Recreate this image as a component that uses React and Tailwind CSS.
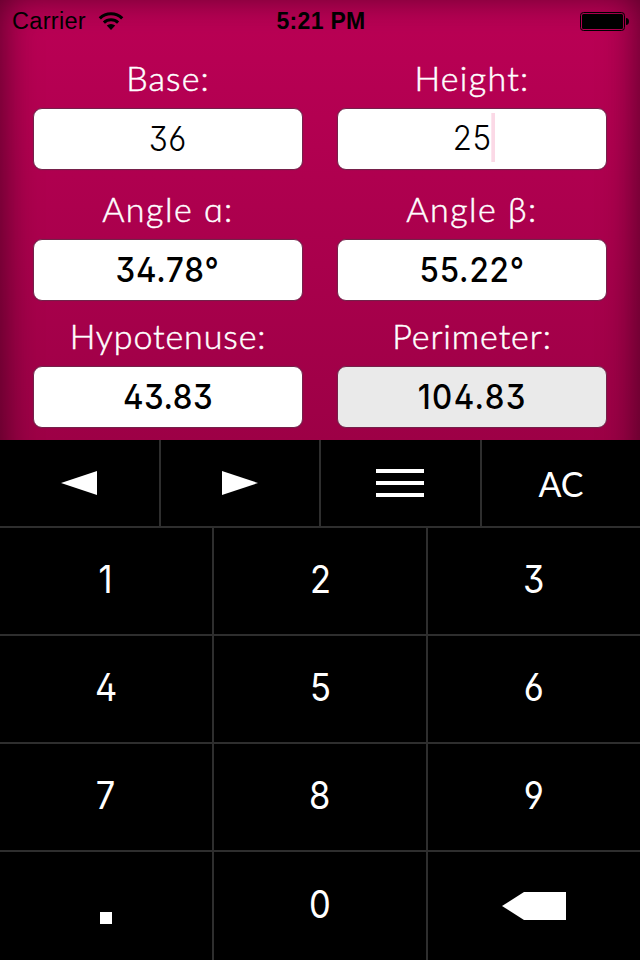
const FIELDS = [
  { label: 'Base:', value: '36', labelClass: 'tracking-[1.1px]', valueClass: 'font-[330] tracking-[0.6px]' },
  { label: 'Height:', value: '25', labelClass: 'tracking-[1.3px]', valueClass: 'font-[330] tracking-[0.6px] -top-px', editing: true },
  { label: 'Angle ɑ:', value: '34.78°', labelClass: 'tracking-[1.5px]', valueClass: 'font-[480] tracking-[0.9px]' },
  { label: 'Angle β:', value: '55.22°', labelClass: 'tracking-[1.5px]', valueClass: 'font-[480] tracking-[0.9px]' },
  { label: 'Hypotenuse:', value: '43.83', labelClass: 'tracking-[0.9px]', valueClass: 'font-[480] tracking-[0.6px]' },
  { label: 'Perimeter:', value: '104.83', labelClass: 'tracking-[0.9px]', valueClass: 'font-[480] tracking-[1.5px]', readOnly: true },
];

const DIGITS = ['1', '2', '3', '4', '5', '6', '7', '8', '9'];

function WifiIcon() {
  return (
    <svg className="ml-3 h-[18px] w-[26px]" viewBox="0 0 26 18" fill="none">
      <path d="M1.8 6.3a16 16 0 0 1 22.4 0" stroke="black" strokeWidth="3.2" />
      <path d="M5.9 10.6a10.2 10.2 0 0 1 14.2 0" stroke="black" strokeWidth="3" />
      <path d="M13 18l-4.2-4.4a6 6 0 0 1 8.4 0z" fill="black" />
    </svg>
  );
}

function BatteryIcon() {
  return (
    <svg className="h-[19px] w-[50px]" viewBox="0 0 50 19">
      <rect x="0.5" y="0.5" width="44" height="18" rx="3" fill="none" stroke="black" />
      <rect x="2" y="2" width="41" height="15" rx="1.5" fill="black" />
      <path d="M46 6c2 0 3 1.5 3 3.5S48 13 46 13z" fill="black" />
    </svg>
  );
}

function StatusBar() {
  return (
    <div className='grid h-10 grid-cols-3 items-center pl-3 pr-[10px] pt-[2px] font-["Liberation_Sans",sans-serif] text-[23.5px] leading-none text-black'>
      <div className="flex items-center">
        <span className="pt-px tracking-[0.3px]">Carrier</span>
        <WifiIcon />
      </div>
      <div className="whitespace-nowrap text-center text-[23px] font-bold tracking-[0.3px]">5:21 PM</div>
      <div className="flex justify-end">
        <BatteryIcon />
      </div>
    </div>
  );
}

function Field({ label, value, labelClass, valueClass, editing, readOnly }) {
  return (
    <div className="flex flex-col">
      <div className={`h-12 text-center font-["Lato",sans-serif] text-[34px] font-light leading-[36px] text-white [-webkit-text-stroke:0.5px_white] ${labelClass}`}>
        {label}
      </div>
      <div className={`flex h-[62px] items-center justify-center rounded-[9px] border border-[#75204a] shadow-[0_0_1px_#75204a] ${readOnly ? 'bg-[#eaeaea]' : 'bg-white'}`}>
        <span className={`relative font-["Inter",sans-serif] text-[34px] leading-none text-black scale-x-92 [font-feature-settings:"ss01"] ${valueClass}`}>
          {value}
          {editing && <span className="absolute -right-[4px] -top-[8px] h-[49px] w-[4px] bg-[#fbd9e6]" />}
        </span>
      </div>
    </div>
  );
}

function Key({ children }) {
  return (
    <button className='flex items-center justify-center bg-black font-["Inter",sans-serif] text-[37.5px] leading-none text-white [font-feature-settings:"ss01"]'>
      {children}
    </button>
  );
}

export default function App() {
  return (
    <div className="flex h-[960px] w-[640px] flex-col overflow-hidden bg-[linear-gradient(#bb0055_0,#9d0046_440px)] shadow-[inset_0_-6px_38px_rgba(0,0,0,0.6)]">
      <StatusBar />

      <div className="grid h-[400px] grid-cols-[270px_270px] grid-rows-[131px_127px_110px] gap-x-[34px] pl-[33px] pt-5">
        {FIELDS.map((f) => (
          <Field key={f.label} {...f} />
        ))}
      </div>

      {/* Keypad, the gaps show through as divider lines */}
      <div className="flex h-[520px] flex-col gap-[2px] bg-[#2e2e2e]">
        <div className="grid h-[86px] grid-cols-[159px_158px_159px_158px] gap-x-[2px]">
          <Key>
            <svg className="mr-[2px] h-6 w-9" viewBox="0 0 36 24">
              <path d="M0 12L36 0V24z" fill="white" />
            </svg>
          </Key>
          <Key>
            <svg className="h-6 w-9" viewBox="0 0 36 24">
              <path d="M36 12L0 0V24z" fill="white" />
            </svg>
          </Key>
          <Key>
            <span className="mr-[2px] flex flex-col gap-2">
              <span className="h-1 w-12 bg-white" />
              <span className="h-1 w-12 bg-white" />
              <span className="h-1 w-12 bg-white" />
            </span>
          </Key>
          <Key>
            <span className='pt-px font-["Lato",sans-serif] text-[34px]'>AC</span>
          </Key>
        </div>
        <div className="grid grid-cols-[212px_212px_212px] grid-rows-[106px_106px_106px_108px] gap-[2px]">
          {DIGITS.map((d) => (
            <Key key={d}>
              <span className="scale-x-92 pb-[2px]">{d}</span>
            </Key>
          ))}
          <Key>
            <span className="mt-6 size-3 bg-white" />
          </Key>
          <Key>
            <span className="scale-x-92 pb-[2px]">0</span>
          </Key>
          <Key>
            <svg className="h-7 w-16" viewBox="0 0 64 28">
              <path d="M0 14L22 0H64V28H22z" fill="white" />
            </svg>
          </Key>
        </div>
      </div>
    </div>
  );
}
